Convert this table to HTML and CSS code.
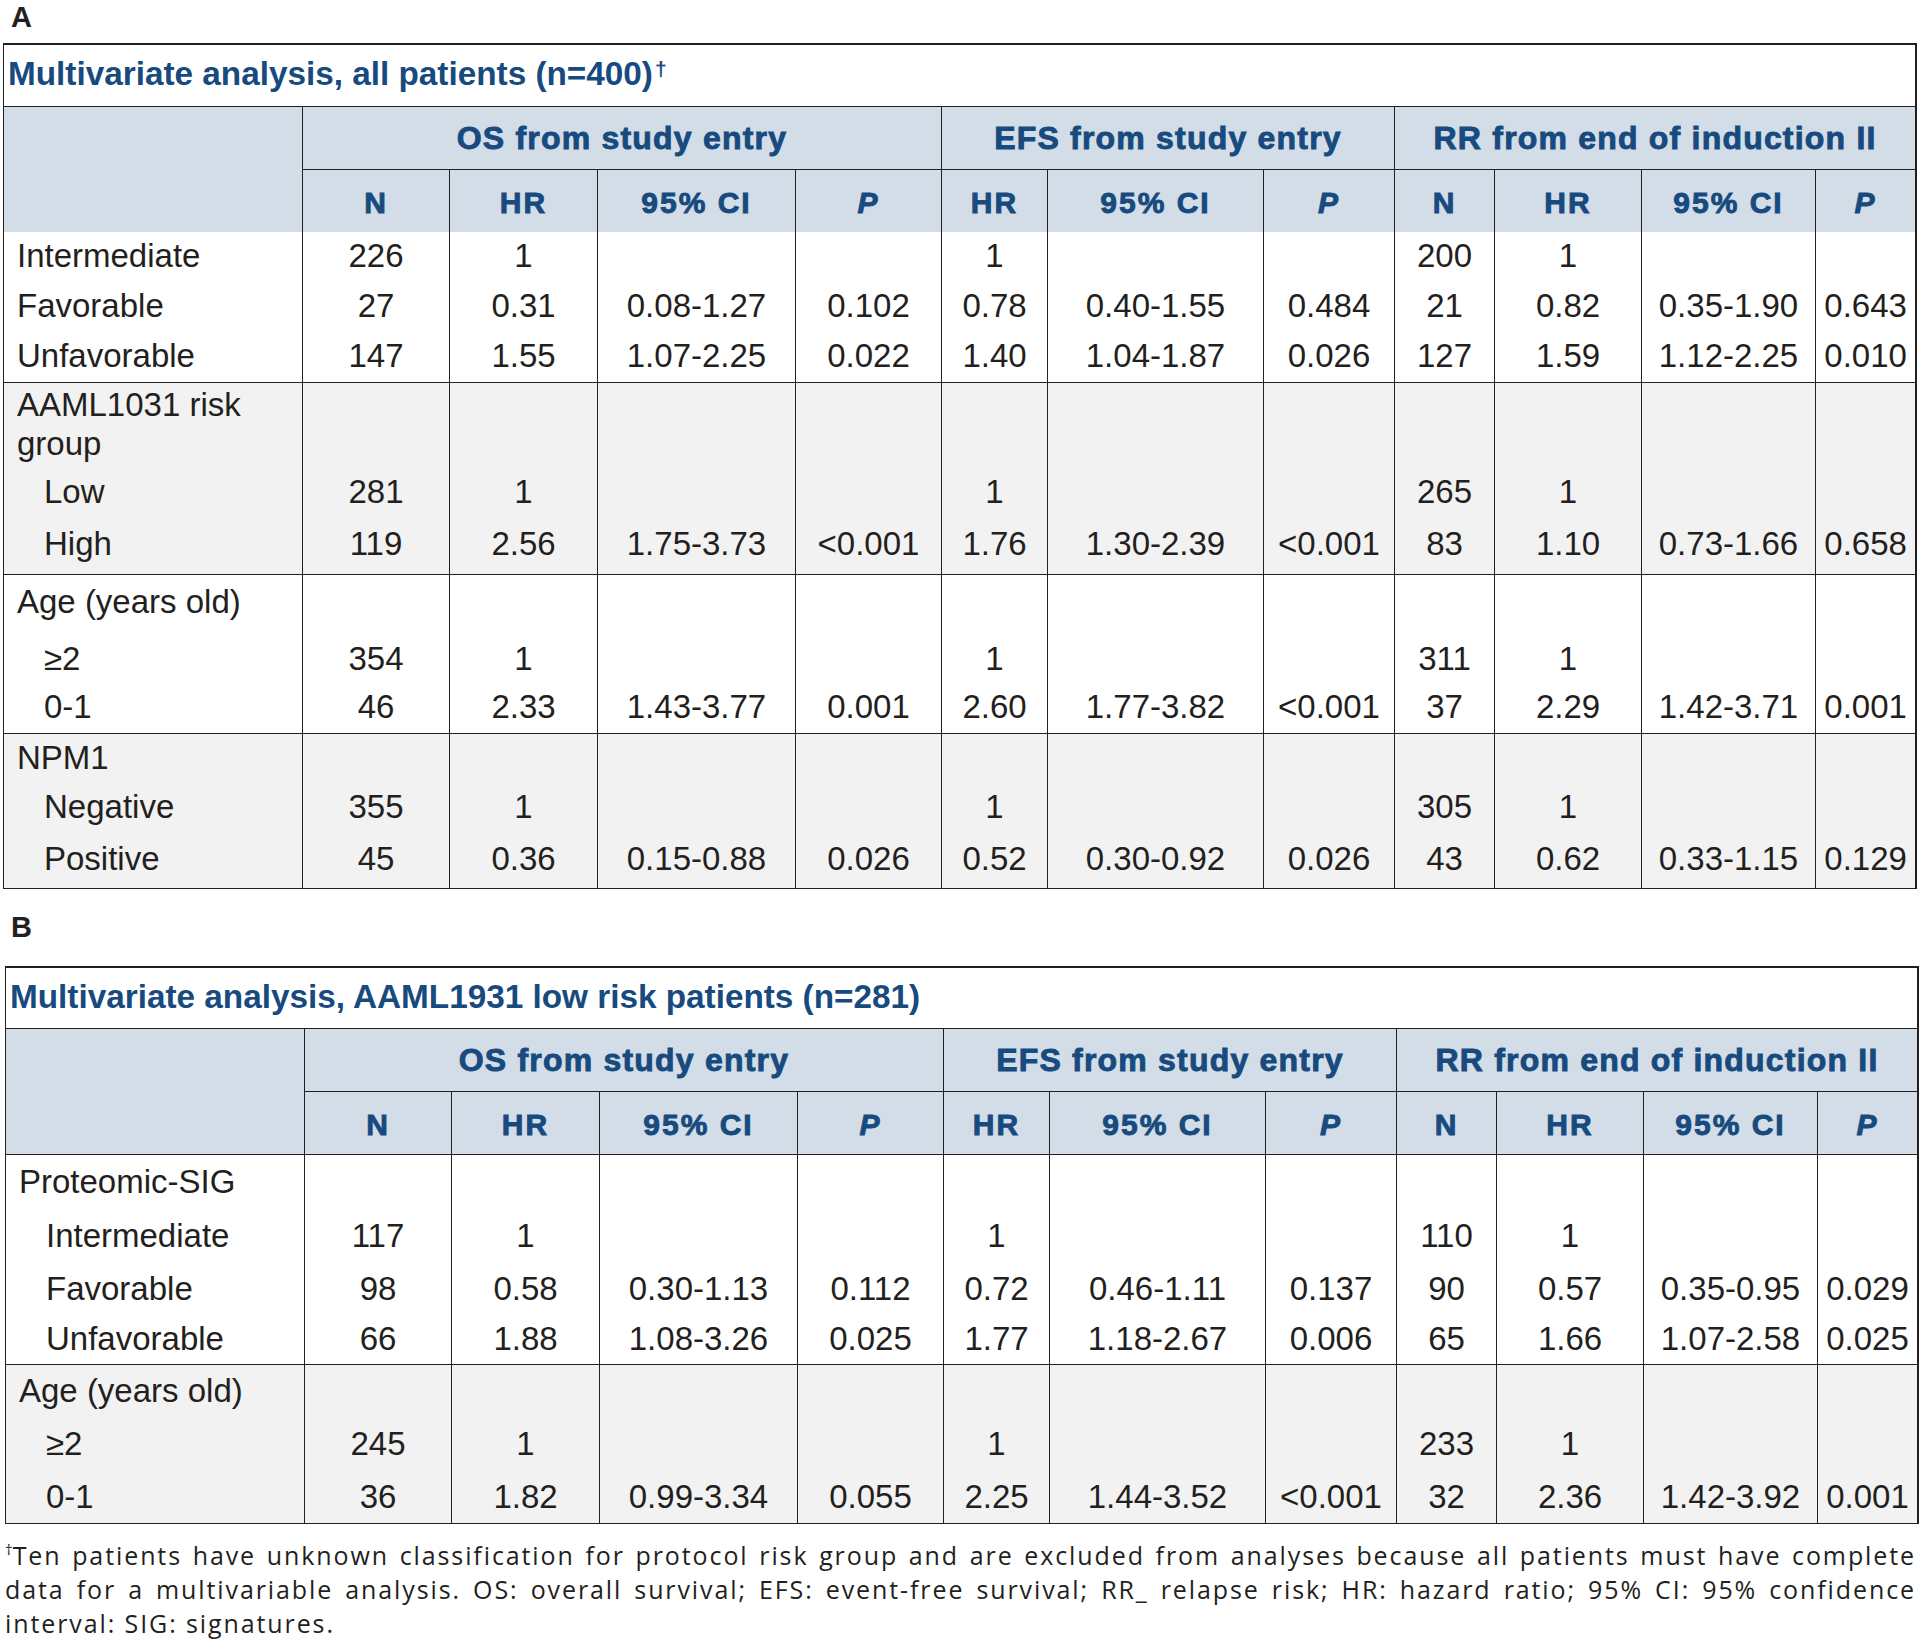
FILE: index.html
```html
<!DOCTYPE html>
<html lang="en">
<head>
<meta charset="utf-8">
<title>Multivariate analysis</title>
<link rel="stylesheet" href="styles.css">
</head>
<body>
<div class="page">
  <div class="panel-label panel-label-a">A</div>
  <table class="mv mv-a">
    <colgroup>
      <col class="c-lab"><col class="c-n"><col class="c-hr"><col class="c-ci"><col class="c-p">
      <col class="c-ehr"><col class="c-eci"><col class="c-ep">
      <col class="c-rn"><col class="c-rhr"><col class="c-rci"><col class="c-rp">
    </colgroup>
    <thead>
      <tr class="h-title"><th class="title-cell" colspan="12">Multivariate analysis, all patients (n=400)<span class="dag">†</span></th></tr>
      <tr class="h-grp grp">
        <th class="blank-head" rowspan="2"></th>
        <th colspan="4">OS from study entry</th>
        <th colspan="3">EFS from study entry</th>
        <th colspan="4">RR from end of induction II</th>
      </tr>
      <tr class="h-sub sub">
        <th>N</th><th>HR</th><th>95% CI</th><th><i>P</i></th>
        <th>HR</th><th>95% CI</th><th><i>P</i></th>
        <th>N</th><th>HR</th><th>95% CI</th><th><i>P</i></th>
      </tr>
    </thead>
    <tbody>
      <tr class="h50"><td class="lab">Intermediate</td><td>226</td><td>1</td><td></td><td></td><td>1</td><td></td><td></td><td>200</td><td>1</td><td></td><td></td></tr>
      <tr class="h50"><td class="lab">Favorable</td><td>27</td><td>0.31</td><td>0.08-1.27</td><td>0.102</td><td>0.78</td><td>0.40-1.55</td><td>0.484</td><td>21</td><td>0.82</td><td>0.35-1.90</td><td>0.643</td></tr>
      <tr class="h51"><td class="lab">Unfavorable</td><td>147</td><td>1.55</td><td>1.07-2.25</td><td>0.022</td><td>1.40</td><td>1.04-1.87</td><td>0.026</td><td>127</td><td>1.59</td><td>1.12-2.25</td><td>0.010</td></tr>
    </tbody>
    <tbody class="shade">
      <tr class="h85 pt2"><td class="lab two-line">AAML1031 risk group</td><td></td><td></td><td></td><td></td><td></td><td></td><td></td><td></td><td></td><td></td><td></td></tr>
      <tr class="h52"><td class="lab ind">Low</td><td>281</td><td>1</td><td></td><td></td><td>1</td><td></td><td></td><td>265</td><td>1</td><td></td><td></td></tr>
      <tr class="h55"><td class="lab ind">High</td><td>119</td><td>2.56</td><td>1.75-3.73</td><td>&lt;0.001</td><td>1.76</td><td>1.30-2.39</td><td>&lt;0.001</td><td>83</td><td>1.10</td><td>0.73-1.66</td><td>0.658</td></tr>
    </tbody>
    <tbody>
      <tr class="h60 pt8"><td class="lab">Age (years old)</td><td></td><td></td><td></td><td></td><td></td><td></td><td></td><td></td><td></td><td></td><td></td></tr>
      <tr class="h48"><td class="lab ind">≥2</td><td>354</td><td>1</td><td></td><td></td><td>1</td><td></td><td></td><td>311</td><td>1</td><td></td><td></td></tr>
      <tr class="h51"><td class="lab ind">0-1</td><td>46</td><td>2.33</td><td>1.43-3.77</td><td>0.001</td><td>2.60</td><td>1.77-3.82</td><td>&lt;0.001</td><td>37</td><td>2.29</td><td>1.42-3.71</td><td>0.001</td></tr>
    </tbody>
    <tbody class="shade">
      <tr class="h49 pt5"><td class="lab">NPM1</td><td></td><td></td><td></td><td></td><td></td><td></td><td></td><td></td><td></td><td></td><td></td></tr>
      <tr class="h52"><td class="lab ind">Negative</td><td>355</td><td>1</td><td></td><td></td><td>1</td><td></td><td></td><td>305</td><td>1</td><td></td><td></td></tr>
      <tr class="h53"><td class="lab ind">Positive</td><td>45</td><td>0.36</td><td>0.15-0.88</td><td>0.026</td><td>0.52</td><td>0.30-0.92</td><td>0.026</td><td>43</td><td>0.62</td><td>0.33-1.15</td><td>0.129</td></tr>
    </tbody>
  </table>

  <div class="panel-label panel-label-b">B</div>
  <table class="mv mv-b">
    <colgroup>
      <col class="c-lab"><col class="c-n"><col class="c-hr"><col class="c-ci"><col class="c-p">
      <col class="c-ehr"><col class="c-eci"><col class="c-ep">
      <col class="c-rn"><col class="c-rhr"><col class="c-rci"><col class="c-rp">
    </colgroup>
    <thead>
      <tr class="h-title-b"><th class="title-cell" colspan="12">Multivariate analysis, AAML1931 low risk patients (n=281)</th></tr>
      <tr class="h-grp grp">
        <th class="blank-head" rowspan="2"></th>
        <th colspan="4">OS from study entry</th>
        <th colspan="3">EFS from study entry</th>
        <th colspan="4">RR from end of induction II</th>
      </tr>
      <tr class="h-sub-b sub ruled">
        <th>N</th><th>HR</th><th>95% CI</th><th><i>P</i></th>
        <th>HR</th><th>95% CI</th><th><i>P</i></th>
        <th>N</th><th>HR</th><th>95% CI</th><th><i>P</i></th>
      </tr>
    </thead>
    <tbody>
      <tr class="h57 pt8"><td class="lab">Proteomic-SIG</td><td></td><td></td><td></td><td></td><td></td><td></td><td></td><td></td><td></td><td></td><td></td></tr>
      <tr class="h53"><td class="lab ind">Intermediate</td><td>117</td><td>1</td><td></td><td></td><td>1</td><td></td><td></td><td>110</td><td>1</td><td></td><td></td></tr>
      <tr class="h50"><td class="lab ind">Favorable</td><td>98</td><td>0.58</td><td>0.30-1.13</td><td>0.112</td><td>0.72</td><td>0.46-1.11</td><td>0.137</td><td>90</td><td>0.57</td><td>0.35-0.95</td><td>0.029</td></tr>
      <tr class="h50"><td class="lab ind">Unfavorable</td><td>66</td><td>1.88</td><td>1.08-3.26</td><td>0.025</td><td>1.77</td><td>1.18-2.67</td><td>0.006</td><td>65</td><td>1.66</td><td>1.07-2.58</td><td>0.025</td></tr>
    </tbody>
    <tbody class="shade">
      <tr class="h55 pt7"><td class="lab">Age (years old)</td><td></td><td></td><td></td><td></td><td></td><td></td><td></td><td></td><td></td><td></td><td></td></tr>
      <tr class="h53"><td class="lab ind">≥2</td><td>245</td><td>1</td><td></td><td></td><td>1</td><td></td><td></td><td>233</td><td>1</td><td></td><td></td></tr>
      <tr class="h50"><td class="lab ind">0-1</td><td>36</td><td>1.82</td><td>0.99-3.34</td><td>0.055</td><td>2.25</td><td>1.44-3.52</td><td>&lt;0.001</td><td>32</td><td>2.36</td><td>1.42-3.92</td><td>0.001</td></tr>
    </tbody>
  </table>

  <div class="foot">
    <span class="foot-line"><span class="lead"><span class="fdag">†</span>Ten</span> patients have unknown classification for protocol risk group and are excluded from analyses because all patients must have complete</span>
    <span class="foot-line">data for a multivariable analysis. OS: overall survival; EFS: event-free survival; RR_ relapse risk; HR: hazard ratio; 95% CI: 95% confidence</span>
    <span class="foot-line foot-last">interval: SIG: signatures.</span>
  </div>
</div>
</body>
</html>
```

FILE: styles.css
```css
html, body {
  margin: 0;
  padding: 0;
  background: #ffffff;
}

body {
  font-family: "Liberation Sans", Arial, sans-serif;
  color: #231f20;
}

.page {
  width: 1923px;
}

/* Panel letters */
.panel-label {
  font-weight: 700;
  font-size: 29px;
  line-height: 34px;
  height: 34px;
  padding-left: 11px;
}
.panel-label-a { margin-bottom: 9px; }
.panel-label-b { margin-top: 21px; margin-bottom: 22px; }

/* Tables */
.mv {
  border-collapse: separate;
  border-spacing: 0;
  table-layout: fixed;
  width: 1914px;
  border-style: solid;
  border-color: #231f20;
  border-width: 2px 2px 1px 1px;
}
.mv-a { margin-left: 3px; }
.mv-b { margin-left: 5px; }

.c-lab { width: 299px; }
.c-n   { width: 147px; }
.c-hr  { width: 148px; }
.c-ci  { width: 198px; }
.c-p   { width: 146px; }
.c-ehr { width: 106px; }
.c-eci { width: 216px; }
.c-ep  { width: 131px; }
.c-rn  { width: 100px; }
.c-rhr { width: 147px; }
.c-rci { width: 174px; }
.c-rp  { width: 99px; }

.mv th,
.mv td {
  padding: 0;
  vertical-align: top;
  white-space: normal;
}

/* Title row */
.title-cell {
  text-align: left;
  font-size: 33.3px;
  font-weight: 700;
  line-height: 37px;
  color: #174a7e;
  padding: 10px 0 0 4px !important;
  border-bottom: 1px solid #231f20;
  background: #ffffff;
  white-space: nowrap;
}
.dag {
  font-size: 21px;
  vertical-align: 9px;
  line-height: 0;
  margin-left: 2px;
}

.h-title { height: 62px; }
.h-title-b { height: 61px; }
.h-grp { height: 63px; }
.h-sub { height: 62px; }
.h-sub-b { height: 63px; }

/* Header rows */
.grp th,
.sub th {
  background: #d3dde7;
  color: #174a7e;
  font-weight: 700;
  text-align: center;
  line-height: 37px;
  -webkit-text-stroke: 0.9px #174a7e;
  border-right: 1px solid #231f20;
}
.grp th:last-child,
.sub th:last-child { border-right: 0; }

.grp th {
  font-size: 32px;
  letter-spacing: 1.2px;
  padding-top: 13px;
  border-bottom: 1px solid #231f20;
}
.grp th.blank-head {
  border-bottom: 0;
}
.sub th {
  font-size: 30px;
  letter-spacing: 2px;
  padding-top: 14px;
}
.sub th i { font-style: italic; }

.ruled th { border-bottom: 1px solid #231f20; }
.mv-b .grp th.blank-head { border-bottom: 1px solid #231f20; }

/* Body */
.mv td {
  font-size: 33px;
  line-height: 37px;
  padding-top: 5px;
  text-align: center;
  border-right: 1px solid #231f20;
  white-space: nowrap;
}
.mv td:last-child { border-right: 0; }
.mv td.lab {
  text-align: left;
  padding-left: 13px;
  white-space: normal;
}
.mv td.lab.ind { padding-left: 40px; }
.mv td.lab.two-line { line-height: 39px; }

.mv tbody tr:last-child td { border-bottom: 1px solid #231f20; }
.mv tbody:last-child tr:last-child td { border-bottom: 0; }

.shade td { background: #f2f2f2; }

.pt2 td { padding-top: 2px; }
.pt5 td { padding-top: 5px; }
.pt7 td { padding-top: 7px; }
.pt8 td { padding-top: 8px; }

.h48 { height: 48px; }
.h49 { height: 49px; }
.h50 { height: 50px; }
.h51 { height: 51px; }
.h52 { height: 52px; }
.h53 { height: 53px; }
.h55 { height: 55px; }
.h57 { height: 57px; }
.h60 { height: 60px; }
.h85 { height: 85px; }

/* Footnote */
.foot {
  margin-top: 14px;
  padding-left: 5px;
  width: 1911px;
  font-family: "Open Sans", "Liberation Sans", sans-serif;
  font-size: 25px;
  letter-spacing: 1.9px;
  line-height: 34px;
  color: #231f20;
}
.foot-line {
  display: block;
  text-align: justify;
  text-align-last: justify;
  white-space: nowrap;
}
.foot-line.foot-last {
  text-align: left;
  text-align-last: left;
}
.lead {
  display: inline-block;
}
.fdag {
  font-size: 15px;
  vertical-align: 10px;
  line-height: 0;
  letter-spacing: 0;
}
```
